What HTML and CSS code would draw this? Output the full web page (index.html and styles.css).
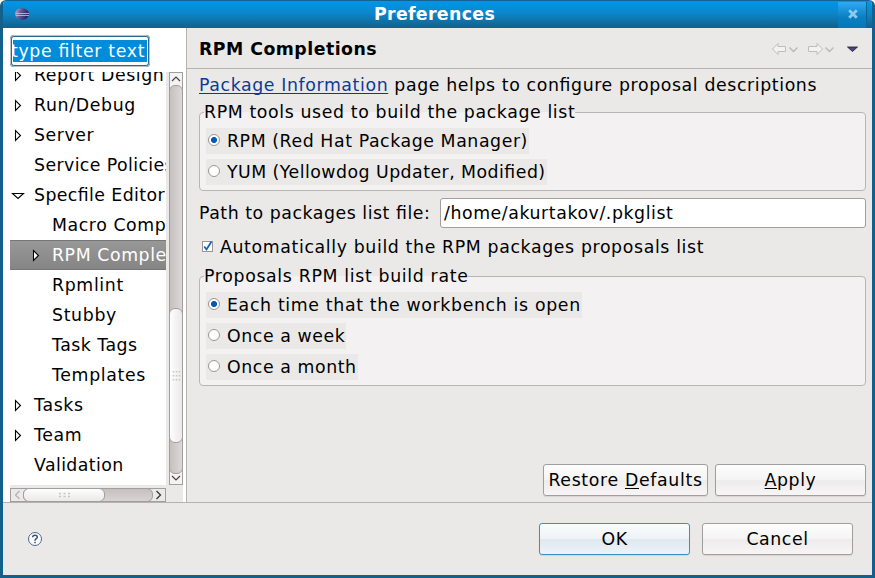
FILE: index.html
```html
<!DOCTYPE html>
<html lang="en">
<head>
<meta charset="utf-8">
<title>Preferences</title>
<link rel="stylesheet" href="styles.css">
</head>
<body>
<div class="window">
  <header class="titlebar">
    <svg class="logo" width="16" height="16" viewBox="0 0 16 16"><defs><linearGradient id="orb" x1="0" x2="1" y1="0" y2=".3"><stop offset="0" stop-color="#d8b5c8"/><stop offset=".45" stop-color="#655998"/><stop offset="1" stop-color="#282266"/></linearGradient></defs><ellipse cx="8" cy="8" rx="7" ry="6" fill="url(#orb)"/><path d="M2 7.500H15M2 9.500H15" stroke="#c5c5ec" stroke-width=".8"/></svg>
    <h1>Preferences</h1>
    <div class="close"><svg width="12" height="12" viewBox="0 0 12 12"><path d="M2.200 2.200L9.800 9.800M9.800 2.200L2.200 9.800" stroke="#8ccaf0" stroke-width="2.800"/></svg></div>
  </header>
  <div class="body">
    <aside class="sidebar">
      <div class="filter"><span>type filter text</span></div>
      <div class="tree-grid">
        <ul class="tree">
          <li><i class="arrow"><svg width="12" height="14"><path d="M3.5 2.5V12.5L8.5 7.5Z"/></svg></i><span>Report Design</span></li>
          <li><i class="arrow"><svg width="12" height="14"><path d="M3.5 2.5V12.5L8.5 7.5Z"/></svg></i><span class="wide">Run/Debug</span></li>
          <li><i class="arrow"><svg width="12" height="14"><path d="M3.5 2.5V12.5L8.5 7.5Z"/></svg></i><span>Server</span></li>
          <li><i class="arrow"></i><span class="tight">Service Policies</span></li>
          <li><i class="arrow"><svg width="14" height="14"><path d="M1.5 5.5H12.5L7 10.5Z"/></svg></i><span class="tight">Specfile Editor</span></li>
          <li class="child"><i class="arrow"></i><span>Macro Completions</span></li>
          <li class="child selected"><i class="arrow"><svg width="12" height="14"><path d="M3.5 2.5V12.5L8.5 7.5Z"/></svg></i><span>RPM Completions</span></li>
          <li class="child"><i class="arrow"></i><span class="wide">Rpmlint</span></li>
          <li class="child"><i class="arrow"></i><span class="wide">Stubby</span></li>
          <li class="child"><i class="arrow"></i><span class="snug">Task Tags</span></li>
          <li class="child"><i class="arrow"></i><span class="wide">Templates</span></li>
          <li><i class="arrow"><svg width="12" height="14"><path d="M3.5 2.5V12.5L8.5 7.5Z"/></svg></i><span class="wide">Tasks</span></li>
          <li><i class="arrow"><svg width="12" height="14"><path d="M3.5 2.5V12.5L8.5 7.5Z"/></svg></i><span>Team</span></li>
          <li><i class="arrow"></i><span class="tight">Validation</span></li>
        </ul>
        <div class="vbar">
          <svg width="14" height="413" viewBox="0 0 14 413"><defs><linearGradient id="vt"><stop offset="0" stop-color="#c5bfbf"/><stop offset="1" stop-color="#ded9d9"/></linearGradient><linearGradient id="vh"><stop offset="0" stop-color="#fff"/><stop offset="1" stop-color="#eae8e8"/></linearGradient></defs>
            <rect x=".5" y=".5" width="13" height="412" fill="#f4f2f2" stroke="#a39e9e"/>
            <rect x=".5" y="13.5" width="13" height="388" rx="5.5" fill="url(#vt)" stroke="#a39e9e"/>
            <rect x=".5" y="236.500" width="13" height="134" rx="5.5" fill="url(#vh)" stroke="#a39e9e"/>
            <path d="M3 9L7 5L11 9M3 404L7 408L11 404" fill="none" stroke="#454545" stroke-width="1.2"/>
            <path d="M4.500 299V309M7.500 299V309M10.500 299V309" stroke="#c8c4c4" stroke-width="1.5" stroke-dasharray="1.5 2.5"/></svg>
        </div>
        <div class="hbar">
          <svg width="156" height="14" viewBox="0 0 156 14"><defs><linearGradient id="ht" x2="0" y2="1"><stop offset="0" stop-color="#c5bfbf"/><stop offset="1" stop-color="#d9d4d4"/></linearGradient><linearGradient id="hh" x2="0" y2="1"><stop offset="0" stop-color="#fff"/><stop offset="1" stop-color="#eae8e8"/></linearGradient></defs>
            <rect x=".5" y=".5" width="155" height="13" fill="#ebe9e9" stroke="#a39e9e"/>
            <rect x="13.500" y=".5" width="129" height="13" rx="5.500" fill="url(#ht)" stroke="#a39e9e"/>
            <rect x="13.500" y=".5" width="81" height="13" rx="5.500" fill="url(#hh)" stroke="#a39e9e"/>
            <path d="M9.500 3L5.500 7L9.500 11" fill="none" stroke="#b7b2b2" stroke-width="1.200"/><path d="M146.500 3L150.500 7L146.500 11" fill="none" stroke="#383838" stroke-width="1.300"/>
            <path d="M49 5.500H60M49 8.500H60" stroke="#c8c4c4" stroke-width="1.500" stroke-dasharray="2 2.500"/></svg>
        </div>
      </div>
    </aside>
    <main class="page">
      <div class="page-head">
        <h2>RPM Completions</h2>
        <svg width="90" height="18" viewBox="0 0 90 18"><g fill="#f3f2f1" stroke="#bfbdbc"><path d="M1.500 9L7 3.500V6.500H14.500V11.500H7V14.500Z"/><path d="M51.500 9L46 3.500V6.500H37.500V11.500H46V14.500Z"/></g><path d="M18.500 7.500L22.500 11.500L26.500 7.500M54.500 7.500L58.500 11.500L62.500 7.500" fill="none" stroke="#bbb9b8" stroke-width="1.400"/><path d="M76.500 7H86.500L81.500 11.500Z" fill="#4c477b" stroke="#17152d" stroke-width=".8"/></svg>
      </div>
      <div class="content">
        <p class="info"><a>Package Information</a> page helps to configure proposal descriptions</p>
        <section class="group g1">
          <h3>RPM tools used to build the package list</h3>
          <div class="radio"><i class="dot on"></i><span>RPM (Red Hat Package Manager)</span></div>
          <div class="radio"><i class="dot"></i><span class="snug">YUM (Yellowdog Updater, Modified)</span></div>
        </section>
        <div class="path"><label>Path to packages list file:</label><div class="field"><span>/home/akurtakov/.pkglist</span></div></div>
        <div class="check"><svg width="13" height="13" viewBox="0 0 13 13"><rect x="1.500" y="1.500" width="10" height="10" fill="#fff" stroke="#9c9696"/><path d="M3.200 6.500L5.500 9.500L10.500 1.500" fill="none" stroke="#1565bd" stroke-width="1.800"/></svg><span class="auto">Automatically build the RPM packages proposals list</span></div>
        <section class="group g2">
          <h3 class="wide">Proposals RPM list build rate</h3>
          <div class="radio"><i class="dot on"></i><span class="wide">Each time that the workbench is open</span></div>
          <div class="radio"><i class="dot"></i><span>Once a week</span></div>
          <div class="radio"><i class="dot"></i><span>Once a month</span></div>
        </section>
        <div class="actions"><div class="btn restore"><span class="wide">Restore <u>D</u>efaults</span></div><div class="btn"><span><u>A</u>pply</span></div></div>
      </div>
    </main>
  </div>
  <footer class="footer">
    <svg width="16" height="16" viewBox="0 0 16 16"><circle cx="8" cy="8" r="6.500" fill="#fafcff" stroke="#52688f"/><path d="M5.700 6.200C5.700 3.500 10.300 3.500 10.300 6.200C10.300 7.800 8 7.700 8 9.700M8 10.700V12.300" fill="none" stroke="#36517e" stroke-width="1.500"/></svg>
    <div class="btn ok"><span>OK</span></div><div class="btn"><span>Cancel</span></div>
  </footer>
</div>
</body>
</html>
```
FILE: styles.css
```css
* { box-sizing: border-box; }
body { margin: 0; background: #fff; color: #000; font: 17.33px/20px "DejaVu Sans", sans-serif; letter-spacing: .58px; font-feature-settings: "liga" 1; overflow: hidden; }
h1, h2, h3, p, ul { margin: 0; padding: 0; font-size: inherit; }
span, label, a, h1, h2, h3 { white-space: pre; }
svg { display: block; flex: none; }
.wide { letter-spacing: .66px; }
.snug { letter-spacing: .47px; }
.tight { letter-spacing: .4px; }
.auto { letter-spacing: .63px; }
.window { width: 875px; height: 578px; background: #eae9e7; border: solid #12608c; border-width: 0 3px 3px; border-radius: 6px 6px 0 0; display: flex; flex-direction: column; overflow: hidden; }
.titlebar { height: 28px; flex: none; margin: 0 -3px; border-top: 1px solid #126391; background: linear-gradient(#0096e9, #0d86c9 45%, #12608c); display: flex; align-items: center; color: #fff; }
.logo { margin: 0 0 1px 14px; }
.titlebar h1 { flex: 1; text-align: center; padding: 0 0 1px 1px; letter-spacing: .35px; }
.close { width: 29px; height: 26px; margin-right: 8px; background: linear-gradient(#30a9f0, #087fc2 60%, #0777b6); border-right: 1px solid #126391; display: flex; align-items: center; justify-content: center; padding: 0 0 1px 2px; }
.body { height: 474px; flex: none; display: flex; }
.sidebar { width: 184px; background: #fff; padding: 7px 0 0 7px; border-right: 1px solid #b5b2b2; flex: none; }
.filter { width: 140px; height: 32px; border: 2px solid #28688f; border-radius: 4px; padding: 3px 1px; margin-bottom: 5px; overflow: hidden; outline: 1px solid #bbc3c7; outline-offset: -1px; }
.filter span { display: block; height: 22px; line-height: 22px; background: #008bdb; color: #fff; text-indent: -2px; overflow: hidden; letter-spacing: .66px; }
.tree-grid { display: grid; grid-template: 413px 14px / 156px 14px; gap: 3px; background: #eae9e7; width: 173px; }
.tree { background: #fff; overflow: hidden; list-style: none; display: flex; flex-direction: column; justify-content: flex-end; padding-bottom: 5px; }
.tree li { height: 30px; flex: none; display: flex; align-items: center; overflow: hidden; }
.arrow { width: 24px; flex: none; padding-left: 2px; }
.arrow svg { fill: none; stroke: #000; stroke-width: 1.1; }
.tree li:nth-child(5) .arrow { padding-left: 1px; }
.tree .child { padding-left: 18px; }
.tree .selected { color: #fff; background: linear-gradient(#989898, #858585); border: solid #777; border-width: 1px 0; }
.selected .arrow svg { fill: #fff; }
.page { flex: 1; display: flex; flex-direction: column; }
.page-head { height: 41px; border-bottom: 1px solid #b5b2b2; display: flex; align-items: center; justify-content: space-between; padding: 1px 11px 0 12px; }
.page-head h2 { letter-spacing: .48px; }
.page-head svg { margin-top: 1px; }
.content { padding: 6px 6px 0 12px; flex: 1; display: flex; flex-direction: column; }
.info { white-space: nowrap; letter-spacing: .61px; }
.info a { color: #0a3a9c; text-decoration: underline; text-underline-offset: 2px; text-decoration-thickness: 1px; text-decoration-skip-ink: none; }
.group { position: relative; border: 1px solid #b8b5b5; border-radius: 4px; background: #f3f1f2; display: flex; flex-direction: column; align-items: flex-start; gap: 5px; padding: 15px 6px 0; flex: none; }
.group h3 { position: absolute; left: 4px; top: -11px; font-weight: 400; background: linear-gradient(#eae9e7 50%, #f3f1f2 50%); }
.g1 { height: 79px; margin-top: 17px; }
.g1 h3 { letter-spacing: .62px; }
.g2 { height: 110px; margin-top: 19px; }
.radio { height: 26px; background: #eae9e7; display: flex; align-items: center; padding: 0 1px 0 2px; gap: 7px; }
.dot { width: 12px; height: 12px; border: 1px solid #9b9696; border-radius: 50%; background: #fff; margin-bottom: 2px; }
.dot.on { background: radial-gradient(circle, #0759ba 0 2.700px, #fff 3.300px); }
.path { display: flex; height: 30px; align-items: center; margin-top: 7px; justify-content: space-between; }
.path label { letter-spacing: .54px; }
.field { width: 426px; height: 30px; border: 1px solid #a39d9f; border-radius: 3px; background: #fff; padding: 4px 3px; }
.check { display: flex; align-items: center; gap: 6px; height: 20px; margin-top: 9px; padding-left: 2px; }
.check svg { margin-bottom: 2px; }
.actions { display: flex; justify-content: flex-end; gap: 7px; margin-top: auto; margin-bottom: 6px; }
.btn { width: 151px; height: 32px; border: 1px solid #a39e9e; border-radius: 3px; background: linear-gradient(#fdfdfd, #f5f4f4 50%, #edebeb 52%, #f7f5f6); box-shadow: 0 1px 1px #d7d4d3; display: flex; align-items: center; justify-content: center; }
.restore { width: 165px; }
u { text-underline-offset: 2px; text-decoration-thickness: 1px; text-decoration-skip-ink: none; }
.footer { flex: 1; border-top: 1px solid #b5b2b2; display: flex; align-items: center; padding: 0 19px 0 24px; gap: 12px; }
.footer svg { margin-right: auto; }
.ok { border-color: #3691c6; background: linear-gradient(#fafcfe, #eef2f6 50%, #dfe8f0 52%, #edf3f8); }
```
